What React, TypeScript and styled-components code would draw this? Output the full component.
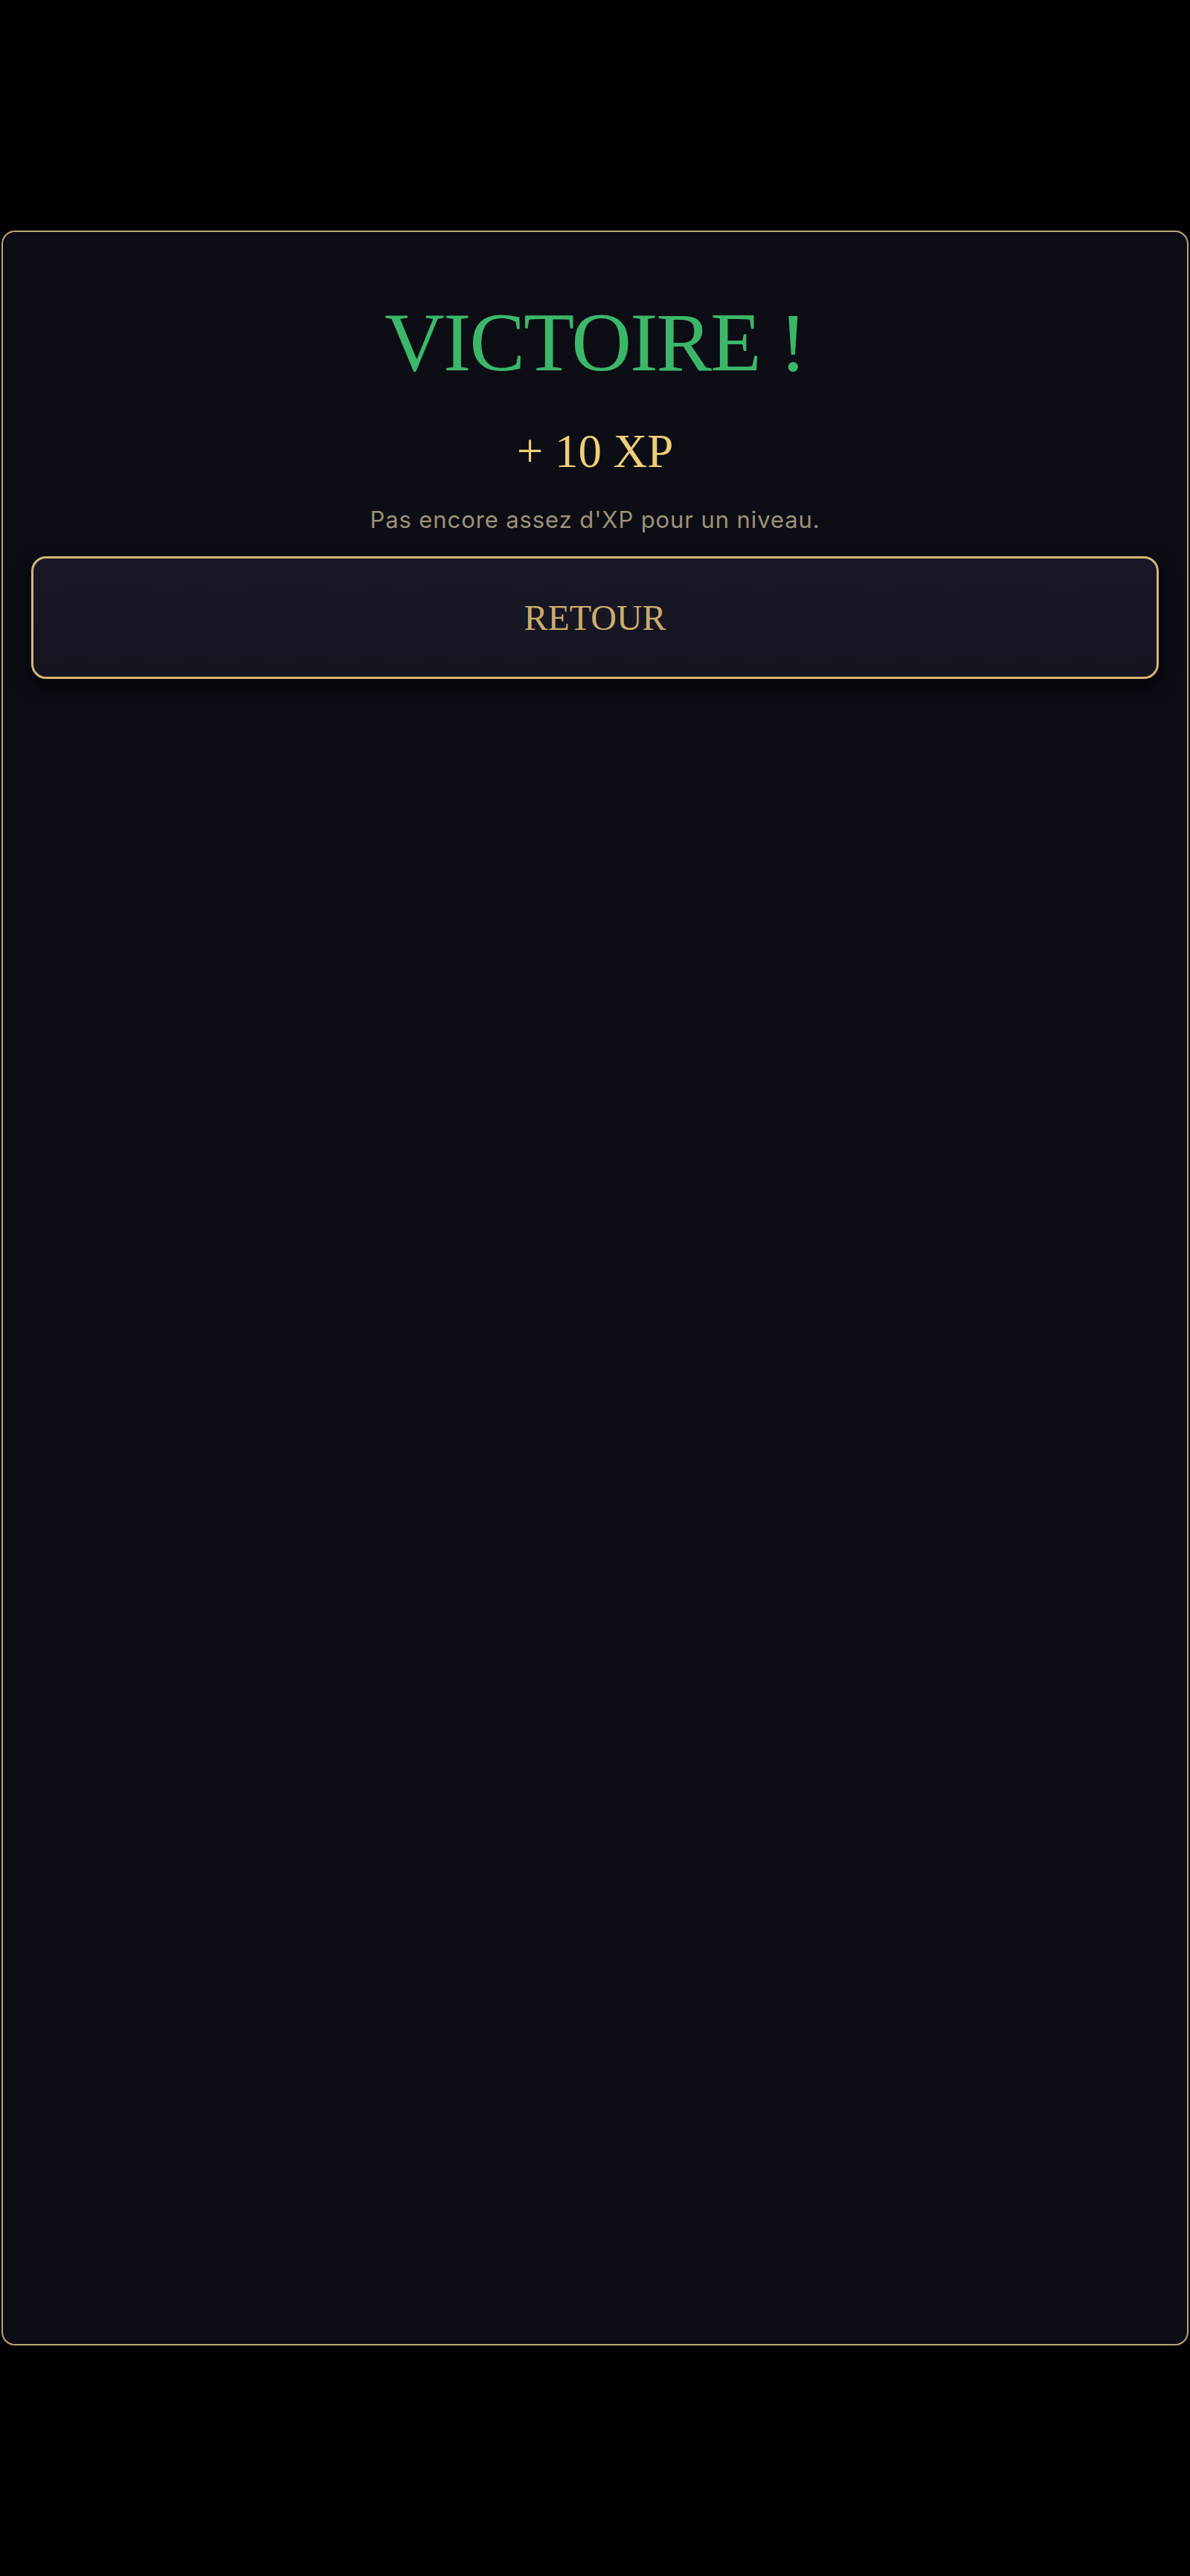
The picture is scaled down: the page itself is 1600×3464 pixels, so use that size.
import styled, { createGlobalStyle } from 'styled-components'

const GlobalStyle = createGlobalStyle`
    html, body {
        margin: 0;
        padding: 0;
        background-color: #000000;
    }
    body {
        min-height: 3464px;
        font-family: Inter, "Noto Sans", sans-serif;
    }
    * {
        box-sizing: border-box;
    }
`

interface ResultProps {
    xp: number;
    message: string;
}

function ResultCard({xp, message} : ResultProps) {
    return (
        <Card>
            <Title>VICTOIRE !</Title>
            <XpGain>+ {xp} XP</XpGain>
            <Message>{message}</Message>
            <BackButton type="button">RETOUR</BackButton>
        </Card>
    )
}

function App() {
    return (
        <>
            <GlobalStyle />
            <Screen>
                <ResultCard xp={10} message="Pas encore assez d'XP pour un niveau." />
            </Screen>
        </>
    )
}

export default App

const Screen = styled.main`
    padding: 310px 2px 310px 2px;
    display: flex;
    flex-direction: column;
`

const Card = styled.section`
    height: 2844px;
    background-color: #0c0d15;
    border: 2px solid #b9a677;
    border-radius: 18px;
    padding: 92px 38px 40px 38px;
    display: flex;
    flex-direction: column;
    align-items: center;
`

const Title = styled.h1`
    margin: 0;
    font-family: "Liberation Serif", "DejaVu Serif", serif;
    font-weight: 400;
    font-size: 112px;
    line-height: 1;
    letter-spacing: -2px;
    color: #3bb76a;
    text-align: center;
`

const XpGain = styled.div`
    margin-top: 60px;
    font-family: "Liberation Serif", "DejaVu Serif", serif;
    font-size: 63px;
    line-height: 1;
    color: #f0cd76;
`

const Message = styled.p`
    margin: 44px 0 0 0;
    font-family: Inter, "Noto Sans", sans-serif;
    font-size: 31px;
    line-height: 1;
    letter-spacing: 0.9px;
    color: #9d9276;
`

const BackButton = styled.button`
    margin-top: 34px;
    width: 100%;
    height: 165px;
    background: linear-gradient(180deg, #181826 0%, #151522 100%);
    border: 3px solid #d8b474;
    border-radius: 20px;
    box-shadow: 0 10px 22px rgba(0, 0, 0, 0.7);
    font-family: "Liberation Serif", "DejaVu Serif", serif;
    font-size: 48px;
    color: #cdac6c;
    cursor: pointer;
`
